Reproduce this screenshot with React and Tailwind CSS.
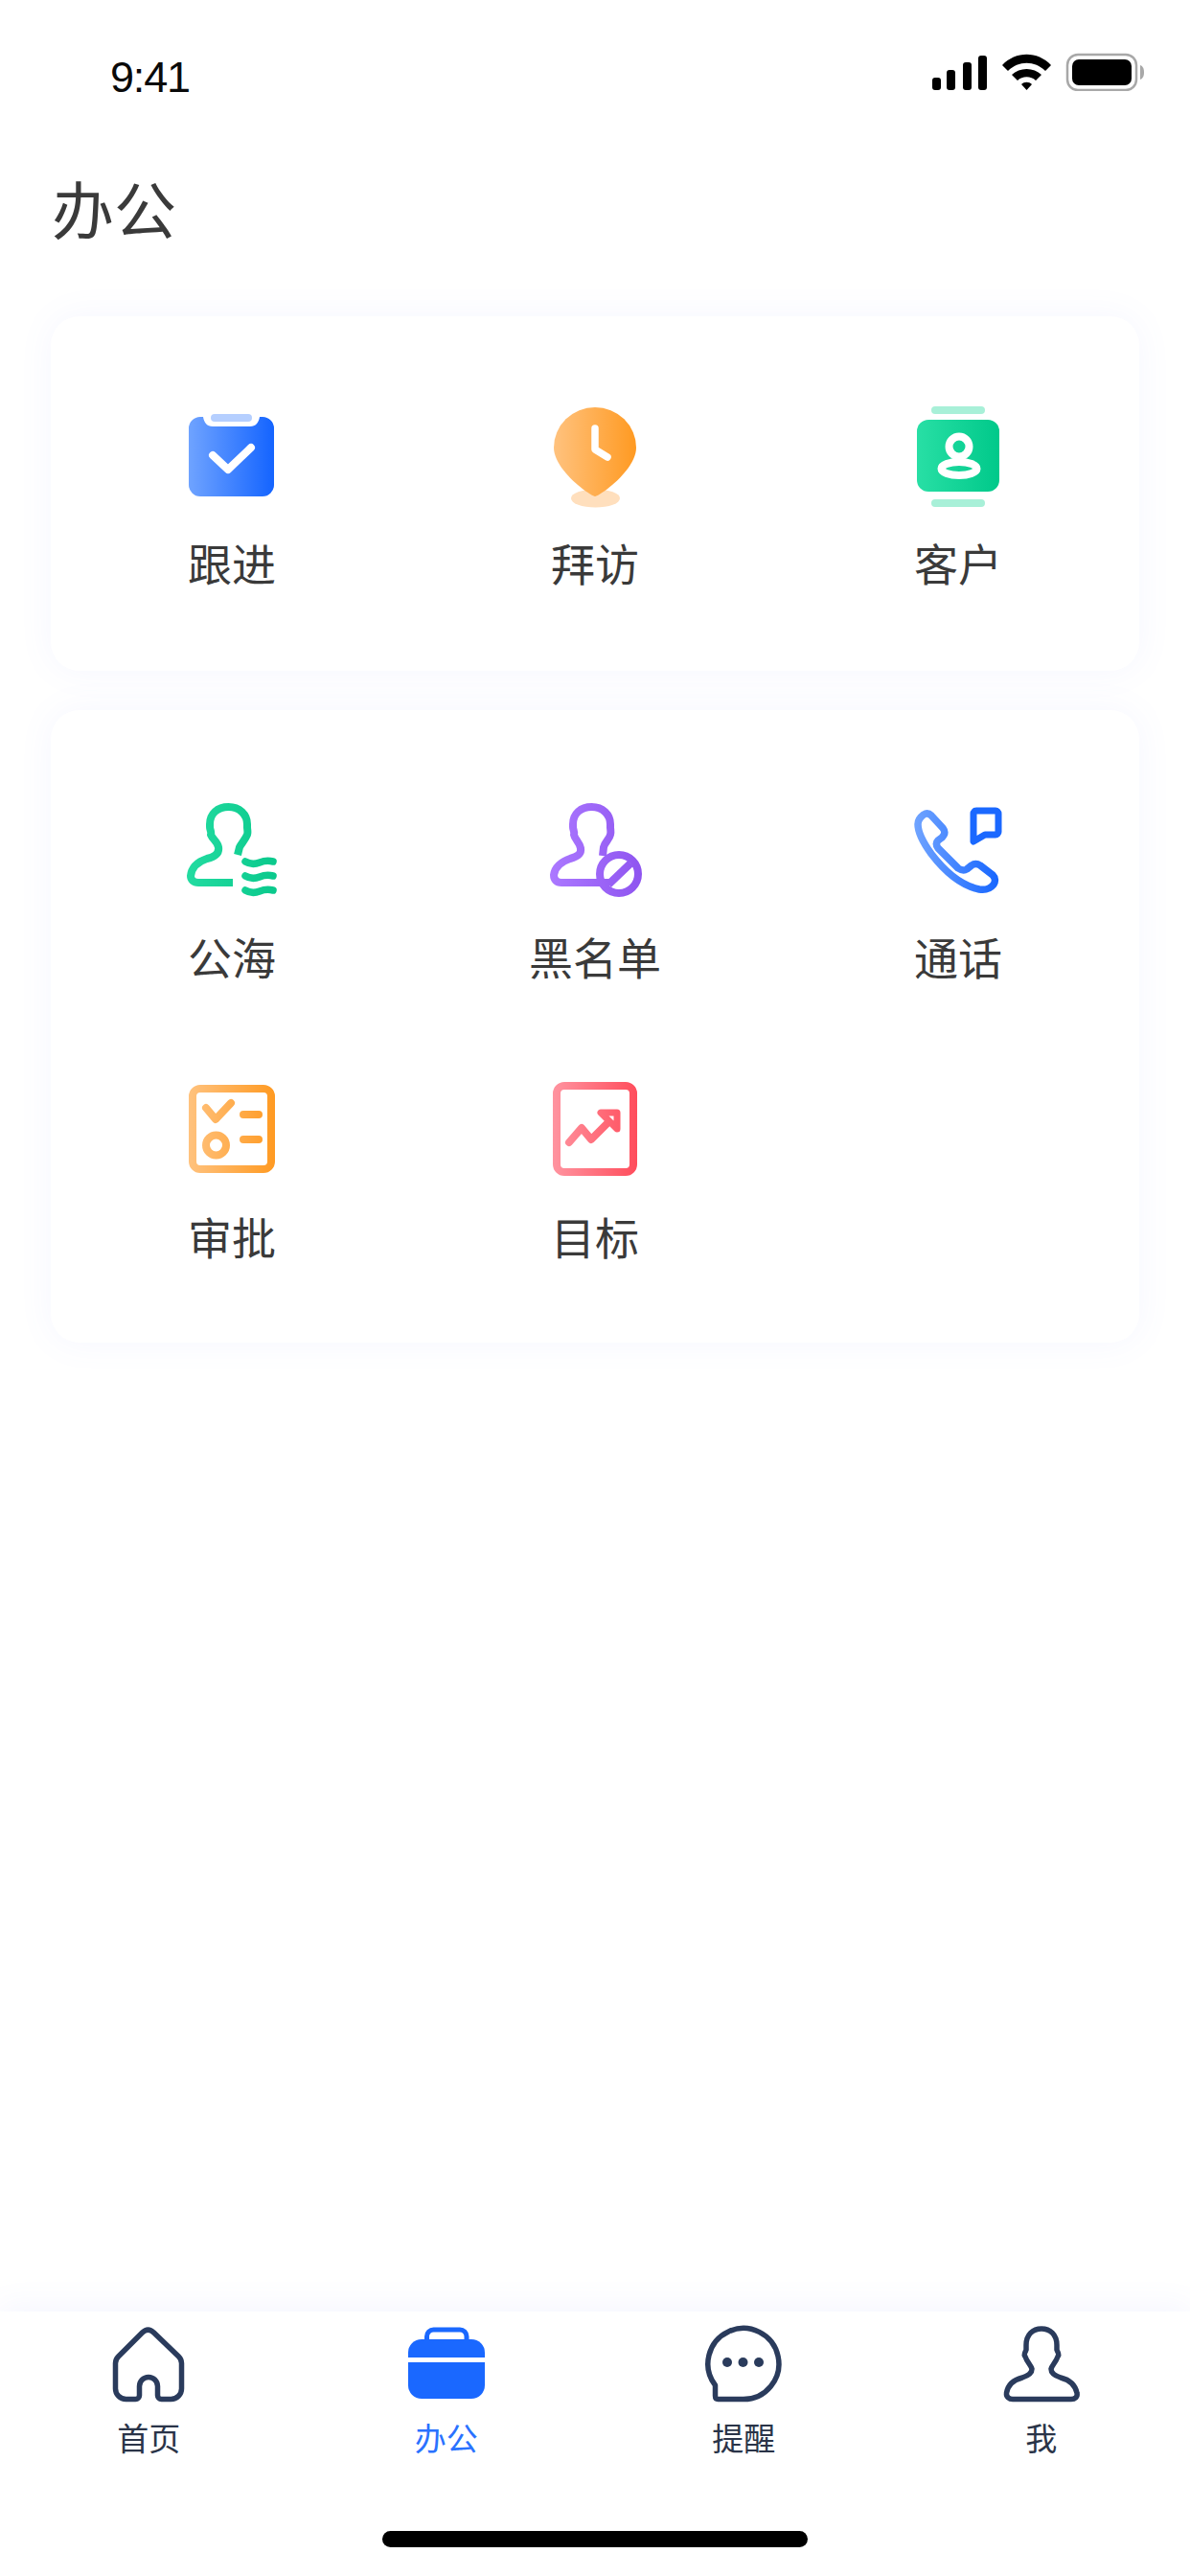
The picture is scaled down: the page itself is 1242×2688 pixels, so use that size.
const cjk = "font-['Noto_Sans_CJK_SC','Liberation_Sans',sans-serif]";

function Ico({ x, y, id, from, to, x1, x2, children }) {
  return (
    <svg className="w-[130px] h-[110px]" viewBox={`${x} ${y} 130 110`} fill="none">
      <defs>
        <linearGradient id={id} gradientUnits="userSpaceOnUse" x1={x1} y1="0" x2={x2} y2="0">
          <stop offset="0" stopColor={from} />
          <stop offset="1" stopColor={to} />
        </linearGradient>
      </defs>
      {children}
    </svg>
  );
}

function Item({ label, icon }) {
  return (
    <div className="flex flex-col items-center">
      <div className="h-[110px] flex items-center justify-center">{icon}</div>
      <div className="mt-[23px] text-[46px] leading-[62px] text-[#3a3a3a]">{label}</div>
    </div>
  );
}

const Follow = () => (
  <Ico x={177} y={422} id="g1" from="#6fa3ff" to="#1464ff" x1={197} x2={286}>
    <path d="M209 435H212C213 441 216 445 222 445H261C267 445 270 441 271 435H274A12 12 0 0 1 286 447V506A12 12 0 0 1 274 518H209A12 12 0 0 1 197 506V447A12 12 0 0 1 209 435Z" fill="url(#g1)" />
    <rect x="220" y="432" width="43" height="8" rx="4" fill="#b5cfff" />
    <path d="M222 475L238 490L262 467" stroke="#fff" strokeWidth="8" strokeLinecap="round" strokeLinejoin="round" />
  </Ico>
);

const Visit = () => (
  <Ico x={556} y={422} id="g2" from="#ffc27e" to="#ff9a22" x1={578} x2={664}>
    <ellipse cx="621.5" cy="520" rx="25.5" ry="9.5" fill="#ffdfbd" />
    <path d="M621 518C617 518 578 491 578 467A43 42 0 0 1 664 467C664 491 625 518 621 518Z" fill="url(#g2)" />
    <path d="M621 447V469L634 477" stroke="#fff" strokeWidth="7.5" strokeLinecap="round" strokeLinejoin="round" />
  </Ico>
);

const Customer = () => (
  <Ico x={935} y={422} id="g3" from="#28dfa5" to="#00c98a" x1={957} x2={1043}>
    <rect x="972" y="424" width="56" height="8" rx="4" fill="#a8f0d8" />
    <rect x="972" y="521" width="56" height="8" rx="4" fill="#a8f0d8" />
    <rect x="957" y="438" width="86" height="75" rx="12" fill="url(#g3)" />
    <ellipse cx="1001" cy="489" rx="18.5" ry="7" stroke="#fff" strokeWidth="8" />
    <circle cx="1001" cy="466" r="10.5" stroke="#fff" strokeWidth="8" />
  </Ico>
);

const Sea = () => (
  <Ico x={177} y={833} id="g4" from="#22dba0" to="#0ac98c" x1={197} x2={288}>
    <path d="M243 921H207C202 921 199 918 199 914C200 905 207 899 216 896C224 894 229 890 228 884C227 878 222 876 220 871C221 868 219 866 219 863V860C219 849 227 842 238.5 842C250 842 258 850 258 860V863C258 866 259 868 258 871C256 876 252 880 250 884L248 892" stroke="url(#g4)" strokeWidth="8" strokeLinejoin="round" />
    <path d="M256 899C261 902 266 902 271 900C276 898 281 898 285 899M256 914C261 917 266 917 271 915C276 913 281 913 285 914M256 929C261 932 266 932 271 930C276 928 281 928 285 929" stroke="url(#g4)" strokeWidth="7.5" strokeLinecap="round" />
  </Ico>
);

const Black = () => (
  <Ico x={556} y={833} id="g5" from="#ab78ff" to="#8f55f0" x1={575} x2={669}>
    <path d="M636 921H586C581 921 578 918 578 913C579 905 586 899 595 896C603 894 607 891 606 885C605 879 600 876 599 871C600 868 598 866 598 863V860C598 849 606 842 617.5 842C629 842 637 850 637 860V863C637 866 638 868 637 871C636 876 631 879 630 884L629 893" stroke="url(#g5)" strokeWidth="8" strokeLinejoin="round" />
    <circle cx="646" cy="912" r="20" stroke="url(#g5)" strokeWidth="8" />
    <path d="M635 923L658 901" stroke="url(#g5)" strokeWidth="8" />
  </Ico>
);

const Call = () => (
  <Ico x={935} y={833} id="g6" from="#6fa3ff" to="#1464ff" x1={955} x2={1045}>
    <path d="M964 850C967 848 970 849 972 851L984 864C987 868 986 871 983 874L979 877C977 879 977 882 979 885L1000 906C1003 908 1006 909 1009 907L1014 903C1017 901 1020 901 1023 903L1036 913C1039 916 1039 920 1037 923C1033 928 1028 929 1022 928C1003 924 985 908 972 891C964 880 958 870 958 860C958 856 960 853 964 850Z" stroke="url(#g6)" strokeWidth="7.5" strokeLinejoin="round" />
    <path d="M1019 846H1039A3 3 0 0 1 1042 849V868A3 3 0 0 1 1039 871H1028L1016 878V849A3 3 0 0 1 1019 846Z" stroke="#1a68ff" strokeWidth="7" strokeLinejoin="round" />
  </Ico>
);

const Approve = () => (
  <Ico x={177} y={1125} id="g7" from="#ffc27e" to="#ff9a22" x1={197} x2={287}>
    <rect x="201" y="1136" width="82" height="84" rx="8" stroke="url(#g7)" strokeWidth="8" />
    <path d="M215 1156L225 1168L241 1151" stroke="url(#g7)" strokeWidth="8" strokeLinecap="round" strokeLinejoin="round" />
    <path d="M254 1163H270M254 1189H270" stroke="url(#g7)" strokeWidth="8" strokeLinecap="round" />
    <circle cx="225.5" cy="1195" r="10.5" stroke="url(#g7)" strokeWidth="8" />
  </Ico>
);

const Target = () => (
  <Ico x={556} y={1125} id="g8" from="#ff94a0" to="#ff4d5c" x1={577} x2={665}>
    <rect x="581" y="1133" width="80" height="90" rx="8" stroke="url(#g8)" strokeWidth="8" />
    <path d="M594 1192L607 1177L617 1189L634 1172" stroke="url(#g8)" strokeWidth="8" strokeLinecap="round" strokeLinejoin="round" />
    <path d="M627 1161H644V1178Z" stroke="url(#g8)" strokeWidth="7" strokeLinejoin="round" />
  </Ico>
);

const navy = "#2a3b5c";

function Tab({ label, active, children }) {
  return (
    <div className="flex-1 flex flex-col items-center">
      <svg className="w-[90px] h-[86px]" viewBox="0 0 90 86" fill="none">{children}</svg>
      <div className={`mt-[11px] text-[33px] leading-[44px] ${active ? "text-[#2a72ff]" : "text-[#2a3448]"}`}>{label}</div>
    </div>
  );
}

const HomeI = () => (
  <g transform="translate(-110.5 -2424)">
    <path d="M132 2503.5A11 11 0 0 1 121 2492.5V2466C121 2463 122 2461 124 2459L149 2434C153 2430 157 2430 161 2434L187 2459C189 2461 190 2463 190 2466V2492.5A11 11 0 0 1 179 2503.5H169A4 4 0 0 1 165 2499.5V2490A9.5 9.5 0 0 0 146 2490V2499.5A4 4 0 0 1 142 2503.5Z" stroke={navy} strokeWidth="5.5" strokeLinejoin="round" />
  </g>
);

const BagI = () => (
  <g transform="translate(-422 -2424)">
    <path d="M446.5 2443V2438A7 7 0 0 1 453.5 2431H481A7 7 0 0 1 488 2438V2443" stroke="#1a68ff" strokeWidth="5" />
    <path d="M441 2441H493A14 14 0 0 1 507 2455V2460H427V2455A14 14 0 0 1 441 2441Z" fill="#1a68ff" />
    <path d="M427 2465H507V2489A14 14 0 0 1 493 2503H441A14 14 0 0 1 427 2489Z" fill="#1a68ff" />
  </g>
);

const ChatI = () => (
  <g transform="translate(-730.5 -2424)">
    <path d="M749 2503.5H775A37 37 0 1 0 746 2489V2500Q746 2503.5 749 2503.5Z" stroke={navy} strokeWidth="5.5" strokeLinejoin="round" />
    <circle cx="758.5" cy="2465" r="5" fill={navy} />
    <circle cx="775" cy="2465" r="5" fill={navy} />
    <circle cx="791.5" cy="2465" r="5" fill={navy} />
  </g>
);

const MeI = () => (
  <g transform="translate(-1041 -2424)">
    <path d="M1056 2503.5H1117C1121 2503.5 1124 2501 1123 2497C1121 2488 1114 2483 1106 2481C1100 2479 1096 2476 1096 2472C1097 2468 1101 2465 1103 2459C1105 2457 1103 2455 1102 2452V2447C1102 2436 1095 2430 1086 2430C1077 2430 1070 2436 1070 2447V2452C1069 2455 1067 2457 1069 2459C1071 2465 1075 2468 1076 2472C1076 2476 1072 2479 1066 2481C1058 2483 1051 2488 1049.5 2497C1049 2501 1052 2503.5 1056 2503.5Z" stroke={navy} strokeWidth="5.5" strokeLinejoin="round" />
  </g>
);

const card = "w-[1136px] mx-auto rounded-[30px] bg-white shadow-[0_0_36px_rgba(110,130,255,0.07)] grid grid-cols-[repeat(3,379px)] justify-center";

export default function App() {
  return (
    <div className={`w-[1242px] h-[2688px] bg-white flex flex-col ${cjk}`}>
      <div className="h-[100px] flex items-start justify-between pl-[115px] pr-[48px] pt-[55px]">
        <div className="font-['Liberation_Sans',sans-serif] text-[45px] leading-[52px] tracking-[-1.2px] text-[#0a0a0a]">9:41</div>
        <svg className="w-[221px] h-[40px]" viewBox="973 55 221 40" fill="none">
          <rect x="973" y="81" width="9" height="13" rx="3" fill="#000" />
          <rect x="988" y="73" width="9" height="21" rx="3" fill="#000" />
          <rect x="1005" y="65" width="9" height="29" rx="3" fill="#000" />
          <rect x="1021" y="58" width="9" height="36" rx="3" fill="#000" />
          <path d="M1046 68C1060 53 1083 53 1097 68L1091 74C1080 63 1063 63 1052 74Z" fill="#000" />
          <path d="M1056 78C1064 70 1079 70 1087 78L1081 84C1076 79 1067 79 1062 84Z" fill="#000" />
          <path d="M1066 88C1069 85 1074 85 1077 88L1071.5 94Z" fill="#000" />
          <rect x="1114" y="57" width="72" height="37" rx="11" stroke="#a8a8a8" strokeWidth="2.5" />
          <rect x="1119" y="62" width="62" height="27" rx="7" fill="#000" />
          <path d="M1190 68C1193 69 1194 72 1194 75.5C1194 79 1193 82 1190 83Z" fill="#a8a8a8" />
        </svg>
      </div>
      <h1 className="mt-[73px] pl-[54px] text-[65px] leading-[86px] font-normal text-[#3a3a3a]">办公</h1>
      <div className="mt-[71px] flex flex-col gap-[41px]">
        <div className={`${card} pt-[92px] pb-[83px]`}>
          <Item label="跟进" icon={<Follow />} />
          <Item label="拜访" icon={<Visit />} />
          <Item label="客户" icon={<Customer />} />
        </div>
        <div className={`${card} pt-[92px] pb-[81px] gap-y-[97px]`}>
          <Item label="公海" icon={<Sea />} />
          <Item label="黑名单" icon={<Black />} />
          <Item label="通话" icon={<Call />} />
          <Item label="审批" icon={<Approve />} />
          <Item label="目标" icon={<Target />} />
        </div>
      </div>
      <div className="mt-auto h-[276px] bg-white shadow-[0_-6px_30px_rgba(110,130,255,0.07)] flex flex-col">
        <div className="flex pt-[12px]">
          <Tab label="首页"><HomeI /></Tab>
          <Tab label="办公" active><BagI /></Tab>
          <Tab label="提醒"><ChatI /></Tab>
          <Tab label="我"><MeI /></Tab>
        </div>
        <div className="mt-[76px] w-[444px] h-[17px] mx-auto rounded-full bg-black" />
      </div>
    </div>
  );
}
